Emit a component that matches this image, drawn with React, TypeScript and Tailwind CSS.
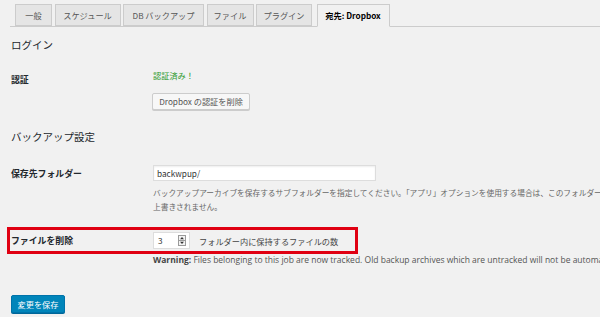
import React from "react";

const jp = '"Noto Sans CJK JP", "Noto Sans", sans-serif';

function Tab({ label, w, active }: { label: string; w: string; active?: boolean }) {
  return (
    <div
      className={
        "h-[22px] border border-[#cccccc] flex items-center justify-center text-[8.2px] leading-none whitespace-nowrap " +
        w +
        (active
          ? " bg-[#f1f1f1] border-b-[#f1f1f1] text-[#000000] font-bold -mb-px h-[23px]"
          : " bg-[#e5e5e5] text-[#555555]")
      }
    >
      {label}
    </div>
  );
}

function Spinner() {
  return (
    <svg width="8" height="11" viewBox="0 0 8 11">
      <rect x="0.5" y="0.5" width="7" height="10" fill="#f3f3f3" stroke="#9a9a9a" />
      <line x1="0.5" y1="5.5" x2="7.5" y2="5.5" stroke="#9a9a9a" />
      <path d="M4 2 L6 4.3 L2 4.3 Z" fill="#333" />
      <path d="M4 9 L6 6.7 L2 6.7 Z" fill="#333" />
    </svg>
  );
}

export default function App() {
  return (
    <div
      className="w-[600px] h-[317px] overflow-hidden bg-[#f1f1f1] text-[#23282d]"
      style={{ fontFamily: jp }}
    >
      {/* tabs */}
      <div className="ml-[10px] pl-[5px] pt-[4px] flex items-start gap-[2.5px] border-b border-[#cccccc] h-[27px]">
        <Tab label="一般" w="w-[37px]" />
        <Tab label="スケジュール" w="w-[66px]" />
        <Tab label="DB バックアップ" w="w-[81px]" />
        <Tab label="ファイル" w="w-[47px]" />
        <Tab label="プラグイン" w="w-[56px]" />
        <div className="ml-[2px]">
          <Tab label="宛先: Dropbox" w="w-[73px]" active />
        </div>
      </div>

      <div className="pl-[11px] flex flex-col items-start">
        <h2 className="mt-[11px] text-[10.5px] leading-[14px] font-normal">ログイン</h2>

        {/* 認証 */}
        <div className="flex items-start">
          <div className="w-[142px] shrink-0 pt-[22px] text-[8.9px] leading-[12px] font-bold">認証</div>
          <div className="pt-[17px] flex flex-col items-start">
            <div className="text-[8.2px] leading-[12px] text-[#2f9a2f]">認証済み！</div>
            <button className="mt-[12px] -ml-[1px] h-[17px] w-[98px] border border-[#cccccc] bg-[#f7f7f7] rounded-[2px] text-[8.2px] leading-none text-[#555555] shadow-[0_1px_0_#cccccc] whitespace-nowrap">
              Dropbox の認証を削除
            </button>
          </div>
        </div>

        <h2 className="mt-[20px] text-[10.5px] leading-[14px] font-normal">バックアップ設定</h2>

        {/* 保存先フォルダー */}
        <div className="flex items-start">
          <div className="w-[142px] shrink-0 pt-[24px] text-[8.9px] leading-[12px] font-bold">保存先フォルダー</div>
          <div className="pt-[21px] flex flex-col items-start">
            <div className="h-[16px] w-[223px] bg-white border border-[#dddddd] shadow-[inset_0_1px_2px_rgba(0,0,0,0.07)] flex items-center pl-[3px] text-[8.2px] text-[#333333]">
              backwpup/
            </div>
            <div className="mt-[5px] text-[7.7px] leading-[14px] text-[#666666] whitespace-nowrap">
              バックアップアーカイブを保存するサブフォルダーを指定してください。「アプリ」オプションを使用する場合は、このフォルダーは無視されます。
            </div>
            <div className="text-[7.7px] leading-[14px] text-[#666666]">上書きされません。</div>
          </div>
        </div>

        {/* ファイルを削除 (highlighted) */}
        <div className="mt-[13px] -ml-[4px] w-[351px] h-[27px] border-[3px] border-[#e00012] flex items-start">
          <div className="pl-[1px] w-[143px] shrink-0 pt-[5px] text-[8.9px] leading-[12px] font-bold">ファイルを削除</div>
          <div className="pt-[2px] flex items-center">
            <div className="h-[17px] w-[37px] bg-white border border-[#dddddd] flex items-center justify-between pl-[4px] pr-[3px] text-[8.2px] text-[#333333]">
              <span>3</span>
              <Spinner />
            </div>
            <span className="ml-[9px] text-[8.2px] leading-[12px] text-[#444444] whitespace-nowrap">
              フォルダー内に保持するファイルの数
            </span>
          </div>
        </div>

        <div
          className="ml-[142px] text-[8.5px] leading-[12px] text-[#555555] whitespace-nowrap"
          style={{ fontFamily: '"Open Sans", "Noto Sans", sans-serif' }}
        >
          <b className="text-[#444444]">Warning:</b> Files belonging to this job are now tracked. Old backup archives which are untracked will not be automatically deleted.
        </div>

        <button className="mt-[29px] h-[18px] w-[54px] bg-[#0085ba] border border-[#0073aa] rounded-[2px] text-white text-[8.2px] leading-none shadow-[0_1px_0_#006799]">
          変更を保存
        </button>
      </div>
    </div>
  );
}
